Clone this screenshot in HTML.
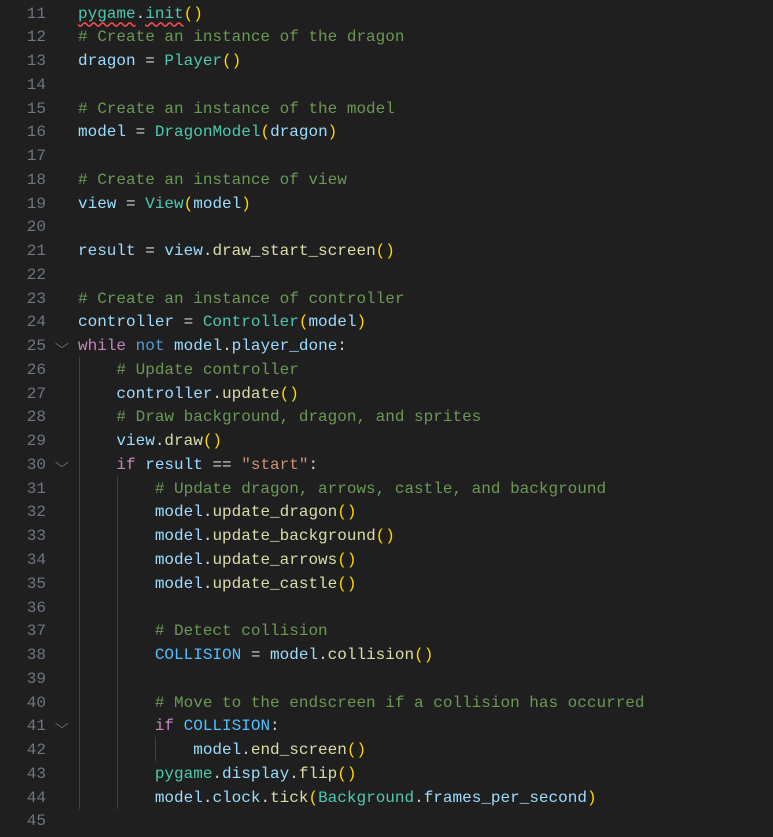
<!DOCTYPE html><html><head><style>
body{margin:0;background:#1f1f1f;width:773px;height:837px;overflow:hidden;font-family:"Liberation Mono",monospace;font-size:16px;}
.l{position:absolute;left:0;height:23.76px;line-height:23.76px;white-space:pre;width:773px}
.n{position:absolute;right:727px;color:#6e7681;text-align:right}
.c{position:absolute;left:78px;color:#cccccc}
.f{position:absolute;left:57px;color:#8b8b8b;font-size:13px}
.v{color:#9cdcfe}.t{color:#4ec9b0}.m{color:#6a9955}.k{color:#c586c0}.b{color:#569cd6}.p{color:#ffd700}.s{color:#ce9178}.fn{color:#dcdcaa}.C{color:#4fc1ff}.o{color:#d4d4d4}
.g{position:absolute;width:1px;background:#404040}
.sq{text-decoration:underline wavy #f14c4c;text-underline-offset:4px}
</style></head><body>
<div class="g" style="left:79px;top:357px;height:452px"></div>
<div class="g" style="left:117px;top:476px;height:333px"></div>
<div class="g" style="left:155px;top:737px;height:24px"></div>
<div id="w"></div>
<script>
var L=[
'<span class="t sq">pygame</span><span class="o">.</span><span class="t sq">init</span><span class="p">()</span>',
'<span class="m"># Create an instance of the dragon</span>',
'<span class="v">dragon</span><span class="o"> = </span><span class="t">Player</span><span class="p">()</span>',
'',
'<span class="m"># Create an instance of the model</span>',
'<span class="v">model</span><span class="o"> = </span><span class="t">DragonModel</span><span class="p">(</span><span class="v">dragon</span><span class="p">)</span>',
'',
'<span class="m"># Create an instance of view</span>',
'<span class="v">view</span><span class="o"> = </span><span class="t">View</span><span class="p">(</span><span class="v">model</span><span class="p">)</span>',
'',
'<span class="v">result</span><span class="o"> = </span><span class="v">view</span><span class="o">.</span><span class="fn">draw_start_screen</span><span class="p">()</span>',
'',
'<span class="m"># Create an instance of controller</span>',
'<span class="v">controller</span><span class="o"> = </span><span class="t">Controller</span><span class="p">(</span><span class="v">model</span><span class="p">)</span>',
'<span class="k">while</span> <span class="b">not</span> <span class="v">model</span><span class="o">.</span><span class="v">player_done</span><span class="o">:</span>',
'    <span class="m"># Update controller</span>',
'    <span class="v">controller</span><span class="o">.</span><span class="fn">update</span><span class="p">()</span>',
'    <span class="m"># Draw background, dragon, and sprites</span>',
'    <span class="v">view</span><span class="o">.</span><span class="fn">draw</span><span class="p">()</span>',
'    <span class="k">if</span> <span class="v">result</span><span class="o"> == </span><span class="s">"start"</span><span class="o">:</span>',
'        <span class="m"># Update dragon, arrows, castle, and background</span>',
'        <span class="v">model</span><span class="o">.</span><span class="fn">update_dragon</span><span class="p">()</span>',
'        <span class="v">model</span><span class="o">.</span><span class="fn">update_background</span><span class="p">()</span>',
'        <span class="v">model</span><span class="o">.</span><span class="fn">update_arrows</span><span class="p">()</span>',
'        <span class="v">model</span><span class="o">.</span><span class="fn">update_castle</span><span class="p">()</span>',
'',
'        <span class="m"># Detect collision</span>',
'        <span class="C">COLLISION</span><span class="o"> = </span><span class="v">model</span><span class="o">.</span><span class="fn">collision</span><span class="p">()</span>',
'',
'        <span class="m"># Move to the endscreen if a collision has occurred</span>',
'        <span class="k">if</span> <span class="C">COLLISION</span><span class="o">:</span>',
'            <span class="v">model</span><span class="o">.</span><span class="fn">end_screen</span><span class="p">()</span>',
'        <span class="t">pygame</span><span class="o">.</span><span class="v">display</span><span class="o">.</span><span class="fn">flip</span><span class="p">()</span>',
'        <span class="v">model</span><span class="o">.</span><span class="v">clock</span><span class="o">.</span><span class="fn">tick</span><span class="p">(</span><span class="t">Background</span><span class="o">.</span><span class="v">frames_per_second</span><span class="p">)</span>',
''];
var h='';var fold={25:1,30:1,41:1};
for(var i=0;i<L.length;i++){var n=11+i;
h+='<div class="l" style="top:'+(2.5+i*23.76)+'px"><span class="n">'+n+'</span>'+(fold[n]?'<span class="f">&#x2335;</span>':'')+'<span class="c">'+L[i]+'</span></div>';}
document.getElementById('w').innerHTML=h;
</script>
<style>.f{font-family:"DejaVu Sans",sans-serif;transform:scaleX(1.4);top:-2px}</style>
</body></html>
